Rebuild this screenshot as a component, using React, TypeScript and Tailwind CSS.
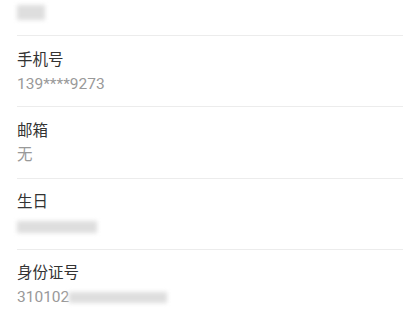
const Blur = ({ w, h, className = "" }: { w: string; h: string; className?: string }) => (
  <span className={`inline-block align-middle ${w} ${h} bg-[#dedede] blur-[2px] ${className}`} />
);

interface Row {
  label: string;
  value: React.ReactNode;
}

const rows: Row[] = [
  { label: "手机号", value: "139****9273" },
  { label: "邮箱", value: "无" },
  {
    label: "生日",
    value: <Blur w="w-[80px]" h="h-[12px]" className="mt-[1px]" />,
  },
  {
    label: "身份证号",
    value: (
      <span className="flex items-center">
        310102
        <Blur w="w-[98px]" h="h-[11px]" />
      </span>
    ),
  },
];

export default function App() {
  return (
    <div
      className="w-[420px] h-[320px] overflow-hidden bg-white"
      style={{ fontFamily: 'Roboto, "Noto Sans CJK SC", sans-serif' }}
    >
      <div className="pl-[17px] pr-[17px]">
        <div className="flex h-[22px] items-center">
          <Blur w="w-[28px]" h="h-[15px]" className="mt-[2px]" />
        </div>
        <div className="h-[14px] border-b border-[#ececec]" />
        {rows.map((r) => (
          <div key={r.label} className="border-b border-[#ececec] pt-[12.5px] pb-[11.8px]">
            <div className="text-[15.5px] leading-[22px] text-[#333333]">{r.label}</div>
            <div className="mt-[2px] flex h-[22px] items-center text-[15.5px] leading-[22px] text-[#999999]">
              {r.value}
            </div>
          </div>
        ))}
      </div>
    </div>
  );
}
